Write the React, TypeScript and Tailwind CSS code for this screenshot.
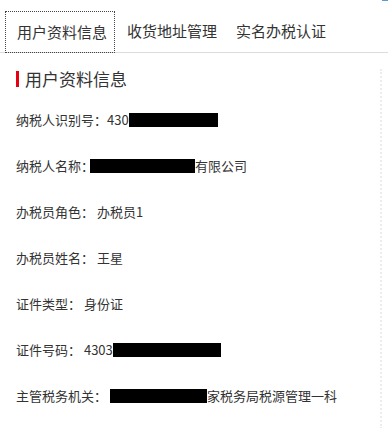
const rows: { label: string; parts: (string | number)[] }[] = [
  { label: "纳税人识别号：", parts: ["430", 89] },
  { label: "纳税人名称：", parts: [-105, "有限公司"] },
  { label: "办税员角色： ", parts: ["办税员1"] },
  { label: "办税员姓名： ", parts: ["王星"] },
  { label: "证件类型： ", parts: ["身份证"] },
  { label: "证件号码： ", parts: ["4303", 108] },
  { label: "主管税务机关： ", parts: [97, "家税务局税源管理一科"] },
]

function Redacted({ width }: { width: number }) {
  // negative width means the box overlaps the label a little
  const w = Math.abs(width)
  return (
    <span
      className={width < 0 ? "inline-block h-[14px] bg-black -ml-[4px]" : "inline-block h-[14px] bg-black"}
      style={{ width: w }}
    />
  )
}

export default function App() {
  return (
    <div
      className="w-[388px] h-[428px] bg-white text-[#333] overflow-hidden"
      style={{ fontFamily: '"Noto Sans CJK SC", "Noto Sans", sans-serif' }}
    >
      <div className="h-px flex justify-end">
        <div className="w-[6px] bg-[#5b9bd5]" />
      </div>

      {/* Tabs */}
      <div className="mt-[10px] h-[42px] flex items-stretch border-b border-[#dcdcdc]">
        <div className="ml-[5px] w-[110px] -mb-px border border-dotted border-[#444] flex items-center pl-[11px] text-[15px]">
          用户资料信息
        </div>
        <div className="ml-[12px] flex items-center text-[15px]">收货地址管理</div>
        <div className="ml-[19px] flex items-center text-[15px]">实名办税认证</div>
      </div>

      {/* Content */}
      <div className="mt-[16px] w-[382px] h-[360px] border-r-2 border-dotted border-[#ececec] pl-[16px]">
        <div className="h-[20px] flex items-center">
          <span className="w-[3px] h-[16px] bg-[#e60012]" />
          <span className="ml-[6px] text-[17px] leading-[20px]">用户资料信息</span>
        </div>
        <div className="mt-[8px]">
          {rows.map((r) => (
            <div key={r.label} className="h-[46px] flex items-center text-[13px] whitespace-pre">
              <span>{r.label}</span>
              {r.parts.map((p, i) =>
                typeof p === "number" ? <Redacted key={i} width={p} /> : <span key={i}>{p}</span>
              )}
            </div>
          ))}
        </div>
      </div>
    </div>
  )
}
